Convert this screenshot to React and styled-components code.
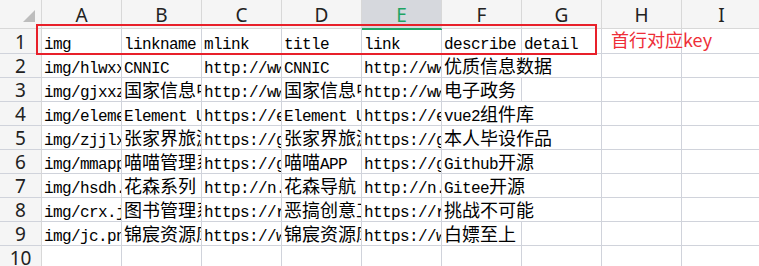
import React from 'react';
import styled, { createGlobalStyle } from 'styled-components';

const Global = createGlobalStyle`
  html, body {
    margin: 0;
    padding: 0;
    background: #fff;
    overflow: hidden;
  }
`;

const Sheet = styled.div`
  position: relative;
  display: grid;
  grid-template-columns: 42px repeat(9, 80px);
  grid-template-rows: 29px 25px repeat(9, 24px);
  width: 762px;
`;

const Corner = styled.div`
  box-sizing: border-box;
  background: #f5f5f5;
  border-right: 1px solid #d8d8d8;
  border-bottom: 1px solid #d8d8d8;
  position: relative;
  svg {
    position: absolute;
    left: 23px;
    top: 10px;
  }
`;

const ColHead = styled.div`
  box-sizing: border-box;
  display: flex;
  align-items: center;
  justify-content: center;
  background: ${(p) => (p.$active ? '#d6d8dd' : '#f5f5f5')};
  color: ${(p) => (p.$active ? '#1fa463' : '#222')};
  border-right: 1px solid #d8d8d8;
  border-bottom: 1px solid ${(p) => (p.$active ? '#1fa463' : '#d8d8d8')};
  box-shadow: ${(p) => (p.$active ? '0 1px 0 #1fa463' : 'none')};
  position: relative;
  z-index: ${(p) => (p.$active ? 1 : 0)};
  font-family: 'Noto Sans', 'Liberation Sans', sans-serif;
  font-size: 19px;
  line-height: 1;
  padding-top: 2px;
`;

const RowHead = styled.div`
  box-sizing: border-box;
  display: flex;
  align-items: center;
  justify-content: center;
  background: #f5f5f5;
  color: #222;
  border-right: 1px solid #d8d8d8;
  border-bottom: 1px solid #d0d3db;
  font-family: 'Noto Sans', 'Liberation Sans', sans-serif;
  font-size: 19px;
  line-height: 1;
  padding-top: 2px;
`;

const Cell = styled.div`
  box-sizing: border-box;
  grid-column: span ${(p) => p.$span || 1};
  border-right: 1px solid #d0d3db;
  border-bottom: 1px solid #d0d3db;
  overflow: hidden;
  white-space: nowrap;
  padding: ${(p) => (p.$first ? 6 : 5)}px 0 0 2px;
  font-family: 'Liberation Mono', monospace;
  font-size: 16px;
  letter-spacing: -0.6px;
  line-height: 20px;
  color: #000;
`;

const Han = styled.span`
  font-family: 'Noto Sans CJK SC', sans-serif;
  font-size: 18px;
  letter-spacing: 0;
  line-height: 0;
`;

const Frame = styled.div`
  position: absolute;
  left: 36px;
  top: 24px;
  width: 561px;
  height: 31px;
  box-sizing: border-box;
  border: 2px solid #e8202a;
  z-index: 2;
`;

const Note = styled.div`
  position: absolute;
  left: 611px;
  top: 27px;
  font-family: 'Noto Sans CJK SC', sans-serif;
  font-size: 18px;
  line-height: 24px;
  color: #ee2e38;
  z-index: 2;
`;

const cols = ['A', 'B', 'C', 'D', 'E', 'F', 'G', 'H', 'I'];

const rows = [
  ['img', 'linkname', 'mlink', 'title', 'link', 'describe', 'detail'],
  ['img/hlwxxzx.png', 'CNNIC', 'http://www.cnnic.net.cn', 'CNNIC', 'http://www.cnnic.net.cn', '优质信息数据'],
  ['img/gjxxzx.png', '国家信息中心', 'http://www.sic.gov.cn', '国家信息中心', 'http://www.sic.gov.cn', '电子政务'],
  ['img/element.png', 'Element UI', 'https://element.eleme.cn', 'Element UI', 'https://element.eleme.cn', 'vue2组件库'],
  ['img/zjjlx.png', '张家界旅游网', 'https://gitee.com', '张家界旅游网', 'https://gitee.com', '本人毕设作品'],
  ['img/mmapp.png', '喵喵管理系统', 'https://github.com', '喵喵APP', 'https://github.com', 'Github开源'],
  ['img/hsdh.png', '花森系列', 'http://n.huasen.cc', '花森导航', 'http://n.huasen.cc', 'Gitee开源'],
  ['img/crx.jpg', '图书管理系统', 'https://rcrx.cn', '恶搞创意工坊', 'https://rcrx.cn', '挑战不可能'],
  ['img/jc.png', '锦宸资源库', 'https://www.jcres.cn', '锦宸资源库', 'https://www.jcres.cn', '白嫖至上'],
  [],
];

const hanRe = /([\u3000-\u9fff\uff00-\uffef]+)/;

function renderText(t) {
  return t.split(hanRe).map((part, i) =>
    hanRe.test(part) ? <Han key={i}>{part}</Han> : part
  );
}

function textWidth(t) {
  let w = 0;
  for (const ch of t) w += hanRe.test(ch) ? 18 : 9;
  return w;
}

function SheetRow({ index, data }) {
  const cells = [];
  let c = 0;
  while (c < 9) {
    const text = data[c] || '';
    let span = 1;
    // text spills into the empty cells to its right
    if (text && textWidth(text) > 77) {
      while (c + span < 9 && !data[c + span] && textWidth(text) > span * 80 - 3) span++;
    }
    cells.push(
      <Cell key={c} $span={span} $first={index === 0}>
        {renderText(text)}
      </Cell>
    );
    c += span;
  }
  return (
    <>
      <RowHead>{index + 1}</RowHead>
      {cells}
    </>
  );
}

export default function App() {
  return (
    <>
      <Global />
      <Sheet>
        <Corner>
          <svg width="12" height="12" viewBox="0 0 12 12">
            <polygon points="12,0 12,12 0,12" fill="#bdbdbd" />
          </svg>
        </Corner>
        {cols.map((c) => (
          <ColHead key={c} $active={c === 'E'}>
            {c}
          </ColHead>
        ))}
        {rows.map((r, i) => (
          <SheetRow key={i} index={i} data={r} />
        ))}
        <Frame />
        <Note>首行对应key</Note>
      </Sheet>
    </>
  );
}
